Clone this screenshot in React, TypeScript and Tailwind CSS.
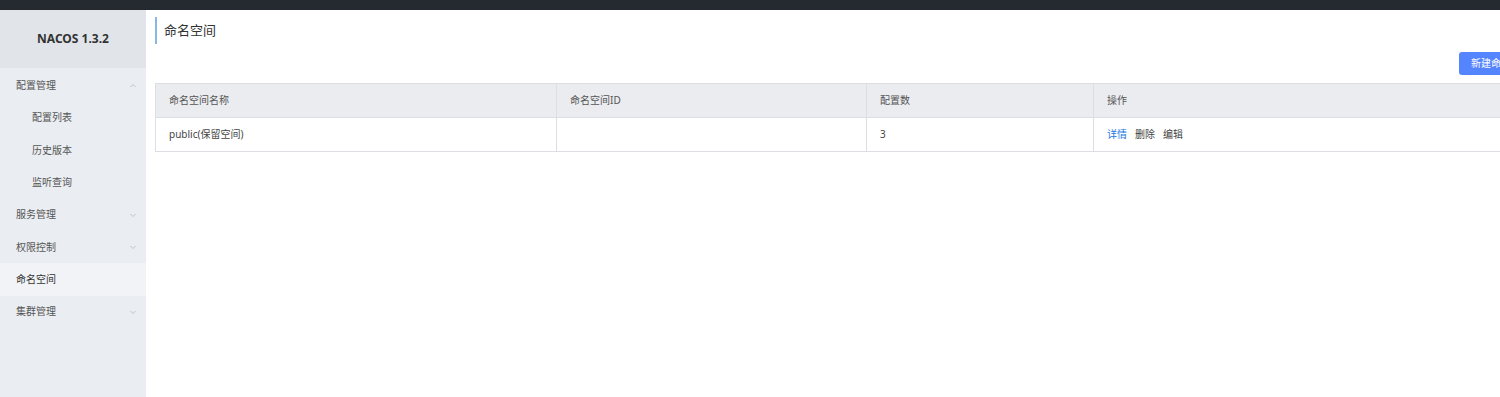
import React from "react";

const font = { fontFamily: '"Noto Sans", "Noto Sans CJK SC", "Liberation Sans", sans-serif' };

function Chevron({ up }: { up?: boolean }) {
  return (
    <svg width="8" height="8" viewBox="0 0 8 8" className="text-[#c0c4cb]">
      <path d={up ? "M1.5 5 L4 2.5 L6.5 5" : "M1.5 3 L4 5.5 L6.5 3"} fill="none" stroke="currentColor" strokeWidth="1" />
    </svg>
  );
}

function MenuItem({ label, sub, arrow, up, active }: { label: string; sub?: boolean; arrow?: boolean; up?: boolean; active?: boolean }) {
  return (
    <div
      className={`flex h-[32.3px] items-center justify-between pr-[9px] text-[10px] ${sub ? "pl-[32px]" : "pl-[16px]"} ${
        active ? "bg-[#f2f3f6] text-[#333]" : "text-[#555]"
      }`}
    >
      <span>{label}</span>
      {arrow && <Chevron up={up} />}
    </div>
  );
}

export default function App() {
  return (
    <div className="w-[1500px] h-[397px] overflow-hidden bg-white flex flex-col" style={font}>
      <div className="h-[10px] bg-[#252a31] shrink-0" />
      <div className="flex flex-1 min-h-0">
        <aside className="w-[146px] shrink-0 bg-[#eaedf1] flex flex-col">
          <div className="h-[58px] bg-[#e1e5e9] flex items-center justify-center text-[12px] font-bold text-[#333]">
            NACOS 1.3.2
          </div>
          <div className="pt-[1.5px]">
            <MenuItem label="配置管理" arrow up />
            <MenuItem label="配置列表" sub />
            <MenuItem label="历史版本" sub />
            <MenuItem label="监听查询" sub />
            <MenuItem label="服务管理" arrow />
            <MenuItem label="权限控制" arrow />
            <MenuItem label="命名空间" active />
            <MenuItem label="集群管理" arrow />
          </div>
        </aside>
        <main className="flex-1 min-w-0 pl-[9px] pt-[7px]">
          <div className="w-[1388px]">
            <div className="h-[27px] border-l-2 border-[#88b7e0] pl-[7px] flex items-center text-[13px] text-[#333]">
              命名空间
            </div>
            <div className="flex justify-end mt-[8px]">
              <button className="h-[23px] px-[12px] rounded-[3px] bg-[#5584ff] text-white text-[10px]">
                新建命名空间
              </button>
            </div>
            <table className="mt-[8px] w-full border-collapse text-[10px] text-[#444] table-fixed">
              <colgroup>
                <col className="w-[401px]" />
                <col className="w-[310px]" />
                <col className="w-[227px]" />
                <col />
              </colgroup>
              <thead>
                <tr className="h-[34px] bg-[#ebecf0]">
                  <th className="border border-[#dcdee3] text-left font-normal pl-[13px] text-[#555]">命名空间名称</th>
                  <th className="border border-[#dcdee3] text-left font-normal pl-[13px] text-[#555]">命名空间ID</th>
                  <th className="border border-[#dcdee3] text-left font-normal pl-[13px] text-[#555]">配置数</th>
                  <th className="border border-[#dcdee3] text-left font-normal pl-[13px] text-[#555]">操作</th>
                </tr>
              </thead>
              <tbody>
                <tr className="h-[34px]">
                  <td className="border border-[#dcdee3] pl-[13px]">public(保留空间)</td>
                  <td className="border border-[#dcdee3] pl-[13px]"></td>
                  <td className="border border-[#dcdee3] pl-[13px]">3</td>
                  <td className="border border-[#dcdee3] pl-[13px]">
                    <span className="text-[#2077e6]">详情</span>
                    <span className="ml-[8px]">删除</span>
                    <span className="ml-[8px]">编辑</span>
                  </td>
                </tr>
              </tbody>
            </table>
          </div>
        </main>
      </div>
    </div>
  );
}
